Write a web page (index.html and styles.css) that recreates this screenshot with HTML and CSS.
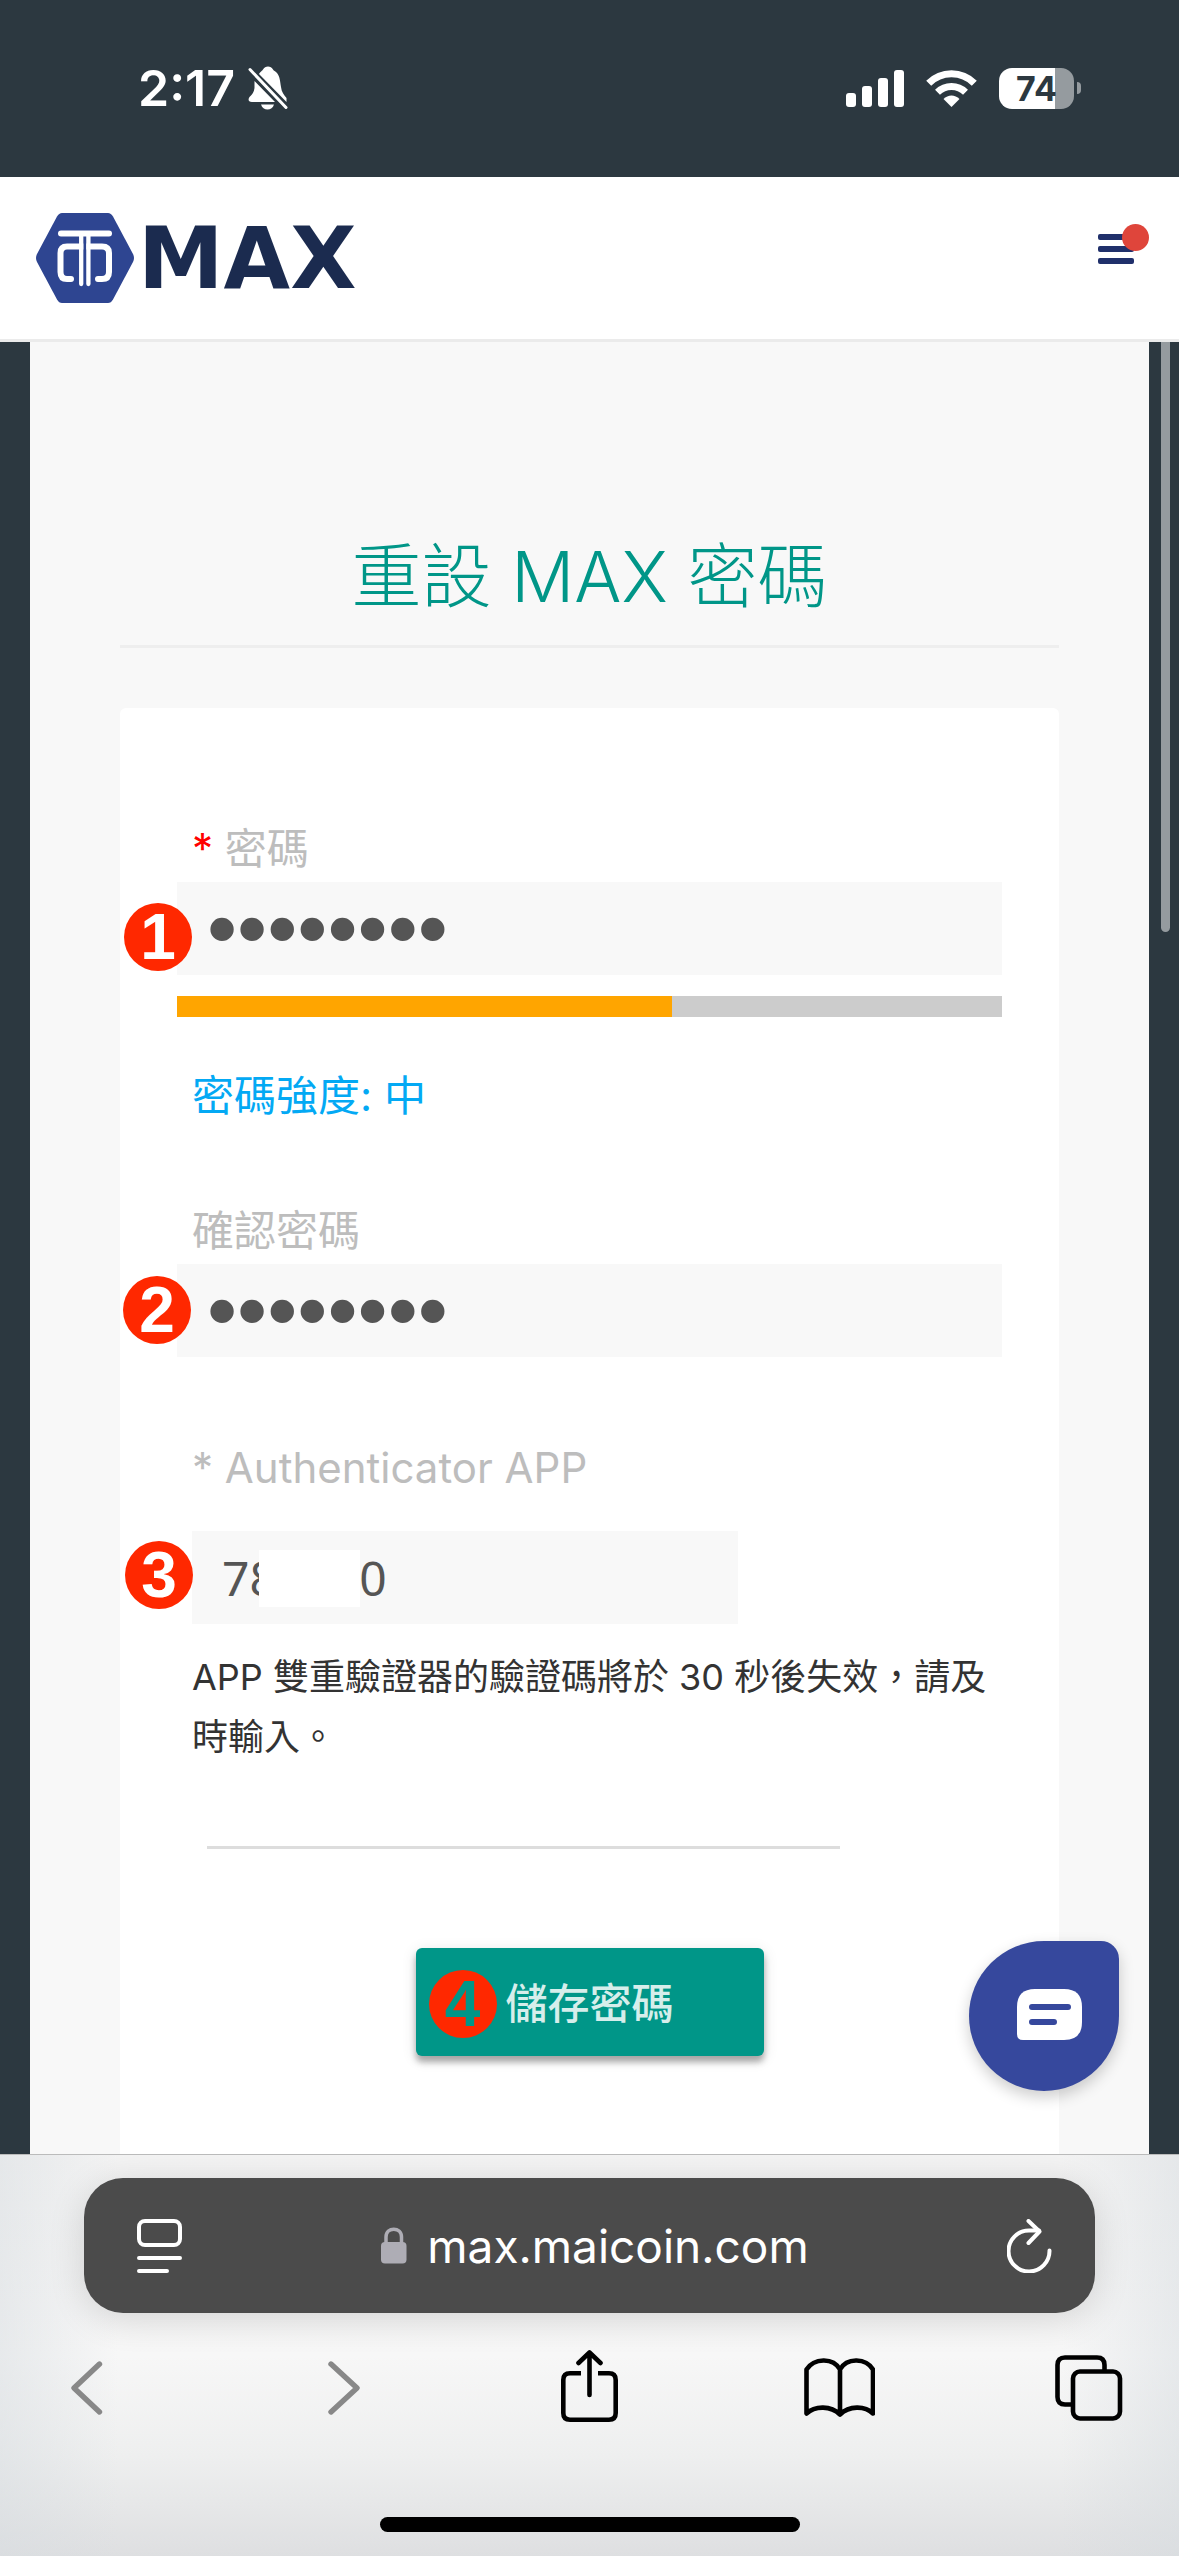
FILE: index.html
```html
<!DOCTYPE html>
<html lang="zh-Hant">
<head>
<meta charset="utf-8">
<meta name="viewport" content="width=device-width, initial-scale=1">
<title>重設 MAX 密碼</title>
<link rel="stylesheet" href="styles.css">
</head>
<body>
<div class="status-bar">
  <div class="status-left">
    <span class="clock">2:17</span>
    <svg class="bell" width="40" height="44" viewBox="0 0 40 44" aria-hidden="true">
      <path fill="#fff" d="M11 8C13 5 14 5 15 3.500C17 -.5 23 -.5 25 3.500C26 5 27 5 29 7C32 11 32 15 33 21C33.500 26 36 29 38.500 32V36L11 8Z"/>
      <path fill="#fff" d="M6.500 15L27 36H4C0 36 0 33 1.500 31C4.500 28 6 26 6.500 22Z"/>
      <path fill="#fff" d="M13 38.500H26C25 42 22.500 43.500 19.500 43.500S14 42 13 38.500Z"/>
      <path stroke="#fff" stroke-width="3" stroke-linecap="round" d="M2 3.500L38 41.500"/>
    </svg>
  </div>
  <div class="status-right">
    <svg width="58" height="37" viewBox="0 0 58 37" fill="#fff" aria-hidden="true">
      <rect x="0" y="23" width="10" height="14" rx="3"/>
      <rect x="16" y="16" width="10" height="21" rx="3"/>
      <rect x="32" y="8" width="10" height="29" rx="3"/>
      <rect x="48" y="0" width="10" height="37" rx="3"/>
    </svg>
    <svg width="51" height="37" viewBox="0 0 51 37" aria-hidden="true">
      <g fill="none" stroke="#fff" stroke-width="7">
        <path d="M2.700 13.200A32 32 0 0 1 48.300 13.200"/>
        <path d="M11.500 22.300A20 20 0 0 1 39.500 22.300"/>
      </g>
      <path fill="#fff" d="M17.500 29C22 24.300 29 24.300 33.500 29L25.500 37Z"/>
    </svg>
    <div class="battery"><span class="battery-level">74</span></div>
  </div>
</div>

<header class="site-header">
  <a class="logo" href="#">
    <svg width="98" height="90" viewBox="0 0 98 90" aria-hidden="true">
      <path fill="#2e4591" d="M26 0H72Q75 0 77 3.500L97 41Q99 45 97 49L77 86.500Q75 90 72 90H26Q23 90 21 86.500L1 49Q-1 45 1 41L21 3.500Q23 0 26 0Z"/>
      <g fill="none" stroke="#fff" stroke-width="6" stroke-linecap="round">
        <path d="M25 20.500H73"/>
        <path d="M35 66H31Q24.500 66 24.500 59V40Q24.500 33.500 31 33.500H66Q73 33.500 73 40V59Q73 66 66 66H62"/>
      </g>
      <path stroke="#2e4591" stroke-width="3" d="M48.800 24V73"/>
      <g stroke="#fff" stroke-width="4.300" stroke-linecap="round">
        <path d="M45.200 22V71M52.400 22V71"/>
      </g>
    </svg>
    <span class="logo-name">MAX</span>
  </a>
  <button class="menu-button" type="button" aria-label="選單">
    <span class="menu-line"></span>
    <span class="menu-line"></span>
    <span class="menu-line"></span>
    <span class="menu-dot"></span>
  </button>
</header>

<main class="page">
  <section class="panel">
    <h1 class="title">重設 MAX 密碼</h1>
    <form class="card">
      <label class="label" for="password"><span class="required">*</span> 密碼</label>
      <div class="field">
        <input class="input input-password" id="password" type="password" value="password">
        <span class="badge badge-one">1</span>
      </div>
      <div class="meter"><div class="meter-fill" style="width:60%"></div></div>
      <p class="strength">密碼強度: 中</p>

      <label class="label" for="confirm">確認密碼</label>
      <div class="field">
        <input class="input input-password" id="confirm" type="password" value="password">
        <span class="badge badge-two">2</span>
      </div>

      <label class="label label-code" for="code">* Authenticator APP</label>
      <div class="field field-code">
        <input class="input input-code" id="code" type="text" value="780040">
        <span class="mask"></span>
        <span class="badge badge-three">3</span>
      </div>
      <p class="note">APP 雙重驗證器的驗證碼將於 30 秒後失效，請及時輸入。</p>
      <hr class="divider">
      <button class="save" type="button"><span class="badge badge-four">4</span>儲存密碼</button>
    </form>
  </section>
  <button class="chat" type="button" aria-label="客服">
    <svg width="65" height="51" viewBox="0 0 65 51" aria-hidden="true">
      <path fill="#fff" d="M18 0H47Q65 0 65 18V33Q65 51 47 51H6Q0 51 0 45V18Q0 0 18 0Z"/>
      <path stroke="#36489d" stroke-width="6" stroke-linecap="round" d="M15 18H51M15 33H37"/>
    </svg>
  </button>
  <div class="scrollbar"></div>
</main>

<footer class="browser-bar">
  <div class="address">
    <button class="address-button" type="button" aria-label="頁面選單">
      <svg width="46" height="54" viewBox="0 0 46 54" fill="none" stroke="#fff" stroke-width="4" stroke-linecap="round">
        <rect x="2" y="2" width="41" height="24" rx="6"/>
        <path d="M2 39H43M2 52H30"/>
      </svg>
    </button>
    <a class="address-text" href="#">
      <svg width="26" height="37" viewBox="0 0 26 37" aria-hidden="true">
        <path fill="none" stroke="#aeadb5" stroke-width="3.500" d="M5 17V10C5 -.5 20.500 -.5 20.500 10V17"/>
        <rect x="0" y="15" width="25.500" height="21.500" rx="4" fill="#aeadb5"/>
      </svg>
      <span>max.maicoin.com</span>
    </a>
    <button class="address-button" type="button" aria-label="重新載入">
      <svg width="46" height="54" viewBox="0 0 46 54" fill="none" stroke="#fff" stroke-width="4" stroke-linecap="round" stroke-linejoin="round">
        <path d="M42.500 31.500A20.500 20.500 0 1 1 22 11.500H32"/>
        <path d="M21.500 2L32.500 12.500L21.500 24"/>
      </svg>
    </button>
  </div>
  <nav class="tools">
    <button class="tool tool-off" type="button" aria-label="上一頁">
      <svg width="72" height="72" viewBox="0 0 72 72"><path d="M48.500 14L23 38L48.500 62"/></svg>
    </button>
    <button class="tool tool-off" type="button" aria-label="下一頁">
      <svg width="72" height="72" viewBox="0 0 72 72"><path d="M29 14L55 38L29 62"/></svg>
    </button>
    <button class="tool" type="button" aria-label="分享">
      <svg width="72" height="72" viewBox="0 0 72 72"><path stroke-linecap="butt" d="M29 23.300H18Q11.300 23.300 11.300 30V63Q11.300 69.700 18 69.700H57Q63.700 69.700 63.700 63V30Q63.700 23.300 57 23.300H46"/><path d="M37.500 45V3M26.500 13L37.500 2.500L48.500 13"/></svg>
    </button>
    <button class="tool" type="button" aria-label="書籤">
      <svg width="72" height="72" viewBox="0 0 72 72"><path d="M3.500 63.500V19.500C11 8 30 7 37 19.500C44 7 63 8 70 19.500V63.500C62 55.500 46 55.500 37 64.500C28 55.500 12 55.500 3.500 63.500ZM37 19.500V64"/></svg>
    </button>
    <button class="tool" type="button" aria-label="分頁">
      <svg width="72" height="72" viewBox="0 0 72 72"><path stroke-linecap="butt" d="M19 54.500H12Q4.500 54.500 4.500 47V15Q4.500 7.500 12 7.500H44Q51.500 7.500 51.500 15V21"/><rect x="20" y="21.500" width="47" height="47" rx="7"/></svg>
    </button>
  </nav>
  <div class="home-indicator"></div>
</footer>
</body>
</html>
```
FILE: styles.css
```css
* { box-sizing: border-box; }

body {
  margin: 0;
  min-height: 100vh;
  display: flex;
  flex-direction: column;
  background: #2c3840;
  color: #333;
  font-family: Inter, "Noto Sans CJK TC", sans-serif;
}

button { padding: 0; border: 0; background: none; font: inherit; }
svg { display: block; flex: none; }

/* Status bar */
.status-bar {
  height: 177px;
  flex: none;
  display: flex;
  justify-content: space-between;
  align-items: flex-start;
  padding: 58px 105px 0 138px;
  color: #fff;
}
.status-left, .status-right { display: flex; align-items: center; height: 60px; }
.status-left { gap: 13px; }
.status-right { gap: 22px; }
.clock { font-size: 50px; font-weight: 600; line-height: 60px; }
.battery {
  position: relative;
  width: 75px;
  height: 41px;
  border-radius: 13px;
  background: linear-gradient(90deg, #fff 75%, #959b9f 75%);
  color: #2c3840;
  text-align: center;
}
.battery::after {
  content: "";
  position: absolute;
  left: 78px;
  top: 14px;
  width: 4px;
  height: 12px;
  border-radius: 0 4px 4px 0;
  background: #959b9f;
}
.battery-level { font-size: 34px; font-weight: 700; line-height: 41px; }

/* Site header */
.site-header {
  flex: none;
  display: flex;
  justify-content: space-between;
  align-items: center;
  height: 165px;
  padding: 0 45px 0 36px;
  border-bottom: 3px solid #ebebeb;
  background: #fff;
}
.logo { display: flex; align-items: center; gap: 4px; color: #1b2b4f; text-decoration: none; }
.logo-name { font-family: "DejaVu Sans", sans-serif; font-size: 86px; font-weight: 700; line-height: 90px; }
.menu-button {
  position: relative;
  display: flex;
  flex-direction: column;
  gap: 6px;
  width: 36px;
  margin-bottom: 18px;
}
.menu-line { height: 6px; border-radius: 2px; background: #20306b; }
.menu-dot {
  position: absolute;
  left: 24px;
  top: -10px;
  width: 27px;
  height: 27px;
  border-radius: 50%;
  background: #df453b;
}

/* Page */
.page {
  position: relative;
  flex: 1;
  display: flex;
  padding: 0 30px;
}
.panel {
  flex: 1;
  display: flex;
  flex-direction: column;
  padding: 185px 90px 0;
  background: #f8f8f8;
}
.title {
  margin: 0 0 60px;
  padding-bottom: 18px;
  border-bottom: 3px solid #eee;
  color: #009688;
  font-size: 70px;
  font-weight: 300;
  line-height: 100px;
  text-align: center;
}
.scrollbar {
  position: absolute;
  top: 0;
  right: 9px;
  width: 9px;
  height: 590px;
  border-radius: 0 0 5px 5px;
  background: #959b9f;
}

/* Form */
.card {
  flex: 1;
  display: flex;
  flex-direction: column;
  padding: 111px 57px 98px;
  border-radius: 6px 6px 0 0;
  background: #fff;
}
.label, .strength { padding: 0 15px; font-size: 42px; line-height: 60px; }
.label { margin-bottom: 3px; color: #bdbdbd; }
.required { color: #f00; }
.field { position: relative; }
.input {
  display: block;
  width: 100%;
  height: 93px;
  border: 0;
  border-radius: 0;
  outline: 0;
  background: #f8f8f8;
  color: #555;
}
.input-password { padding: 0 30px; font-family: "Liberation Sans", sans-serif; font-size: 86px; }
.meter { height: 21px; margin-top: 21px; background: #ccc; }
.meter-fill { height: 100%; background: #ffa500; }
.strength { margin: 49px 0 75px; color: #03a9f4; }
.label-code { margin: 81px 0 33px; }
.field-code { width: 546px; margin-left: 15px; }
.input-code { padding: 0 30px; font-family: "Noto Sans", sans-serif; font-size: 48px; }
.mask { position: absolute; left: 67px; top: 19px; width: 101px; height: 57px; background: #fff; }
.note { margin: 23px 0 79px; padding-left: 15px; font-size: 36px; line-height: 60px; }
.divider { width: 633px; height: 3px; margin: 0 0 99px 30px; border: 0; background: #ddd; }
.save {
  position: relative;
  align-self: center;
  width: 348px;
  height: 108px;
  padding-bottom: 4px;
  border-radius: 6px;
  background: #009688;
  box-shadow: 0 6px 6px rgba(0, 0, 0, .3), 0 3px 15px rgba(0, 0, 0, .12);
  color: #d6eeeb;
  font-size: 42px;
  font-weight: 500;
}

/* Step badges */
.badge {
  position: absolute;
  width: 68px;
  height: 68px;
  border-radius: 50%;
  background: #ff2800;
  color: #fff;
  font-family: "Liberation Sans", sans-serif;
  font-size: 64px;
  font-weight: 700;
  line-height: 68px;
  text-align: center;
}
.badge-one { left: -53px; top: 21px; }
.badge-two { left: -54px; top: 12px; }
.badge-three { left: -67px; top: 10px; }
.badge-four { left: 13px; top: 22px; color: #009688; }

/* Chat launcher */
.chat {
  position: absolute;
  right: 60px;
  bottom: 63px;
  display: flex;
  justify-content: center;
  align-items: center;
  width: 150px;
  height: 150px;
  padding: 0 0 3px 11px;
  border-radius: 75px 18px 75px 75px;
  background: #36489d;
  box-shadow: 0 6px 15px rgba(0, 0, 0, .2);
}

/* Browser toolbar */
.browser-bar {
  flex: none;
  display: flex;
  flex-direction: column;
  padding: 23px 0 24px;
  border-top: 1px solid #bbb;
  background:
    linear-gradient(90deg, rgba(215, 220, 224, .5), rgba(215, 220, 224, 0) 10%, rgba(215, 220, 224, 0) 90%, rgba(215, 220, 224, .5)),
    linear-gradient(#f3f3f3, #f7f7f7 50%, #eeefef 75%, #dedfe1);
}
.address {
  display: flex;
  justify-content: space-between;
  align-items: center;
  height: 135px;
  margin: 0 84px;
  padding: 0 42px 0 53px;
  border-radius: 39px;
  background: #4b4b4b;
  box-shadow: 0 6px 36px rgba(0, 0, 0, .14);
}
.address-text {
  display: flex;
  align-items: center;
  gap: 20px;
  color: #fff;
  font-size: 46px;
  line-height: 60px;
  text-decoration: none;
}
.tools {
  display: flex;
  justify-content: space-between;
  margin: 37px 0 95px;
  padding: 0 54px 0 51px;
}
.tool { width: 72px; height: 72px; }
.tool svg { fill: none; stroke: #000; stroke-width: 4.6px; stroke-linecap: round; stroke-linejoin: round; }
.tool-off svg { stroke: #888; stroke-width: 5.4px; }
.home-indicator { align-self: center; width: 420px; height: 15px; border-radius: 8px; background: #000; }
```
